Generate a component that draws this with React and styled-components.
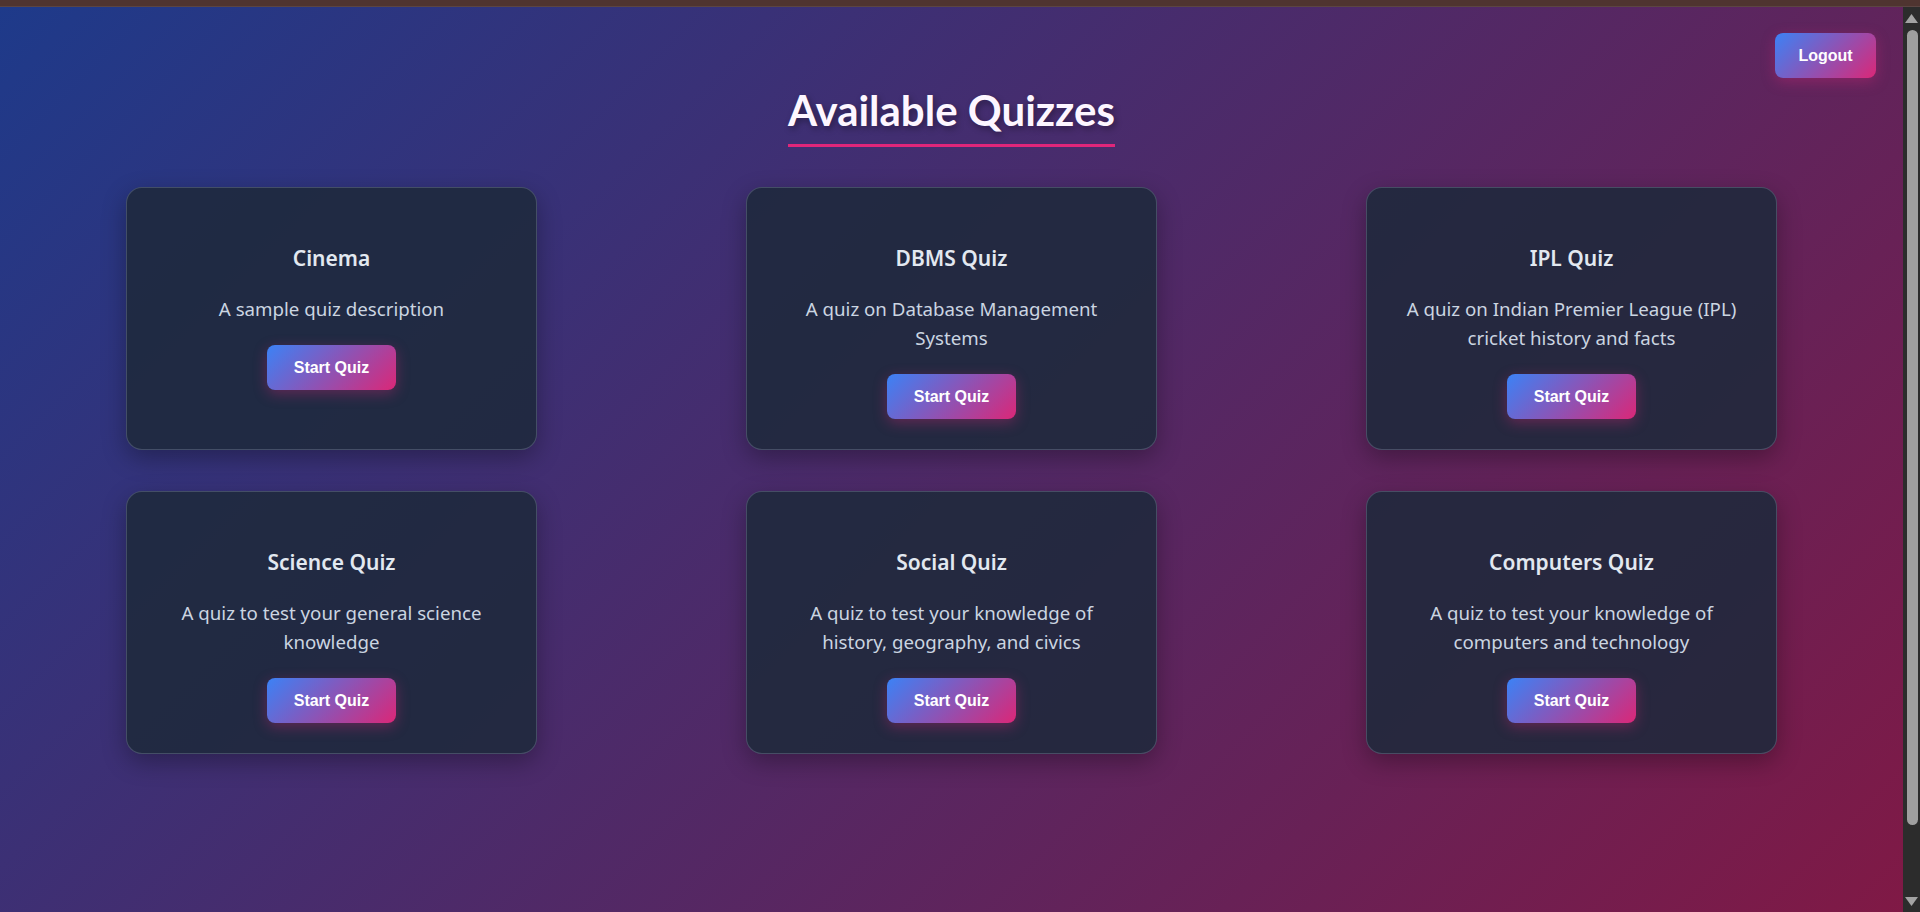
import styled, { createGlobalStyle } from "styled-components";

const GlobalStyle = createGlobalStyle`
    html, body {
        margin: 0;
        padding: 0;
    }

    body {
        font-family: "Noto Sans", "Open Sans", sans-serif;
        background-color: #2c2c2c;
    }
`;

const TopStrip = styled.div`
    height: 6px;
    background-color: #4f3430;
    border-bottom: 1px solid #5c4542;
`;

const Viewport = styled.div`
    display: flex;
`;

const Page = styled.main`
    position: relative;
    flex: 1;
    min-height: 999px;
    box-sizing: border-box;
    display: flex;
    flex-direction: column;
    align-items: center;
    padding-top: 78px;
    background: linear-gradient(135deg, #1e3a8a 0%, #831843 100%);
`;

const ScrollTrack = styled.aside`
    width: 17px;
    flex-shrink: 0;
    display: flex;
    flex-direction: column;
    align-items: center;
    background-color: #2c2c2c;
`;

const ScrollArrow = styled.svg`
    display: block;
    width: 13px;
    height: 9px;
    margin-top: ${p => p.$top}px;
    fill: #a3a3a3;
`;

const ScrollThumb = styled.div`
    width: 11px;
    height: 795px;
    margin-top: 7px;
    margin-left: 2px;
    border-radius: 6px;
    background-color: #9f9f9f;
`;

const LogoutButton = styled.button`
    position: absolute;
    top: 26px;
    right: 27px;
    width: 101px;
    height: 45px;
    border: none;
    border-radius: 8px;
    background: linear-gradient(135deg, #3b82f6, #db2777);
    color: #fff;
    font-family: "Liberation Sans", Arial, sans-serif;
    font-size: 16px;
    font-weight: 700;
    box-shadow: 0 4px 14px rgba(219, 39, 119, 0.35);
    cursor: pointer;
`;

const Heading = styled.h1`
    margin: 0;
    padding-bottom: 9px;
    border-bottom: 3px solid #e0267a;
    color: #fdf6ff;
    font-family: Lato, "Noto Sans", sans-serif;
    font-size: 42px;
    font-weight: 700;
    line-height: 1.2;
    text-shadow: 2px 3px 6px rgba(0, 0, 0, 0.35);
`;

const QuizGrid = styled.section`
    display: grid;
    grid-template-columns: repeat(3, 411px);
    column-gap: 209px;
    row-gap: 41px;
    margin-top: 40px;
`;

const QuizCard = styled.article`
    display: flex;
    flex-direction: column;
    align-items: center;
    gap: 22px;
    padding: 57px 32px 30px;
    background-color: rgba(30, 41, 59, 0.88);
    border: 1px solid rgba(148, 163, 184, 0.3);
    border-radius: 16px;
    box-shadow: 0 8px 24px rgba(0, 0, 0, 0.3);
    text-align: center;
`;

const QuizTitle = styled.h3`
    margin: 0;
    color: #e2e8f0;
    font-size: 21px;
    font-weight: 600;
    line-height: 27px;
`;

const QuizDescription = styled.p`
    margin: 0;
    color: #cbd5e1;
    font-size: 18.7px;
    line-height: 29px;
`;

const StartButton = styled.button`
    width: 129px;
    height: 45px;
    border: none;
    border-radius: 8px;
    background: linear-gradient(135deg, #3b82f6, #db2777);
    color: #fff;
    font-family: "Liberation Sans", Arial, sans-serif;
    font-size: 16px;
    font-weight: 700;
    box-shadow: 0 4px 14px rgba(219, 39, 119, 0.35);
    cursor: pointer;
`;

const quizzes = [
    { id: 1, title: "Cinema", description: "A sample quiz description" },
    { id: 2, title: "DBMS Quiz", description: "A quiz on Database Management Systems" },
    { id: 3, title: "IPL Quiz", description: "A quiz on Indian Premier League (IPL) cricket history and facts" },
    { id: 4, title: "Science Quiz", description: "A quiz to test your general science knowledge" },
    { id: 5, title: "Social Quiz", description: "A quiz to test your knowledge of history, geography, and civics" },
    { id: 6, title: "Computers Quiz", description: "A quiz to test your knowledge of computers and technology" },
];

const App = () => {
    return (
        <>
            <GlobalStyle />
            <TopStrip />
            <Viewport>
                <Page>
                    <LogoutButton>Logout</LogoutButton>
                    <Heading>Available Quizzes</Heading>
                    <QuizGrid>
                        {quizzes.map(quiz =>
                            <QuizCard key={quiz.id}>
                                <QuizTitle>{quiz.title}</QuizTitle>
                                <QuizDescription>{quiz.description}</QuizDescription>
                                <StartButton>Start Quiz</StartButton>
                            </QuizCard>
                        )}
                    </QuizGrid>
                </Page>
                <ScrollTrack>
                    <ScrollArrow $top={7} viewBox="0 0 13 9"><path d="M6.5 0 L13 9 L0 9 Z" /></ScrollArrow>
                    <ScrollThumb />
                    <ScrollArrow $top={72} viewBox="0 0 13 9"><path d="M0 0 L13 0 L6.5 9 Z" /></ScrollArrow>
                </ScrollTrack>
            </Viewport>
        </>
    );
}

export default App;
